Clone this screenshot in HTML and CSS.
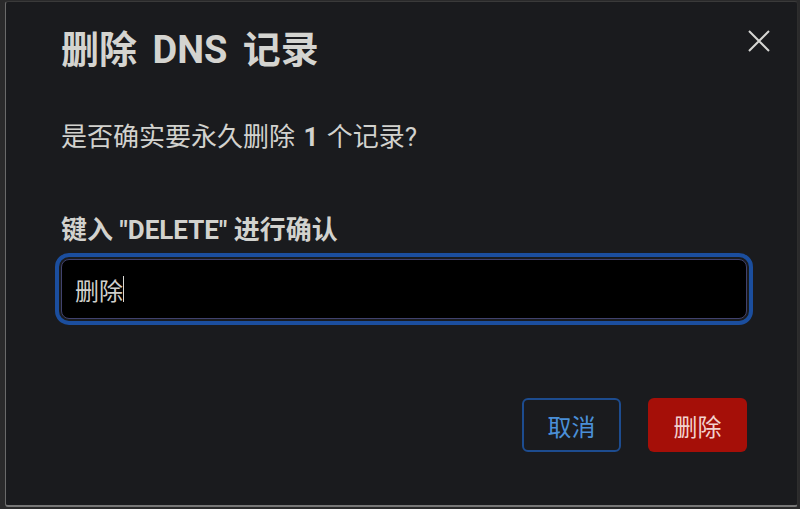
FILE: index.html
```html
<!DOCTYPE html>
<html lang="zh-CN">
<head>
<meta charset="utf-8">
<title>删除 DNS 记录</title>
<link rel="stylesheet" href="styles.css">
</head>
<body>
<div class="modal">
  <div class="header">
    <h2 class="title">删除 DNS 记录</h2>
    <button class="close" aria-label="关闭">
      <svg width="22" height="22" viewBox="0 0 22 22"><path d="M1 1L21 21M21 1L1 21" stroke="#d6d6d3" stroke-width="2" fill="none"/></svg>
    </button>
  </div>
  <p class="text">是否确实要永久删除 <b>1</b> 个记录?</p>
  <label class="label" for="confirm">键入 "DELETE" 进行确认</label>
  <div class="field">
    <input id="confirm" class="input" value="删除">
    <span class="caret"></span>
  </div>
  <div class="footer">
    <button class="btn cancel">取消</button>
    <button class="btn danger">删除</button>
  </div>
</div>
</body>
</html>
```

FILE: styles.css
```css
html, body {
  margin: 0;
  padding: 0;
  height: 100%;
}
body {
  background: #2a2a2b;
  font-family: Roboto, "Noto Sans CJK SC", sans-serif;
  overflow: hidden;
}
.modal {
  box-sizing: border-box;
  margin: 1px 2px 0 5px;
  height: 506px;
  background: #1a1b1e;
  border-left: 1px solid #6a6a6a;
  border-top: 1px solid #3a3a3a;
  border-bottom: 2px solid #777;
  border-right: 1px solid #2e2e2e;
  border-radius: 3px;
  padding: 25px 50px 0 55px;
}
.header {
  display: flex;
  justify-content: space-between;
  align-items: flex-start;
}
.title {
  margin: 0;
  font-size: 38px;
  line-height: 46px;
  font-weight: 700;
  color: #d4d4d0;
  word-spacing: 6px;
  font-family: Roboto, "Noto Sans CJK SC", sans-serif;
}
.close {
  background: none;
  border: 0;
  padding: 0;
  margin: 3px -23px 0 0;
  width: 22px;
  height: 22px;
  display: flex;
}
.text {
  margin: 46px 0 0;
  font-size: 26px;
  line-height: 36px;
  color: #d2d2ce;
  word-spacing: 2px;
}
.text b {
  font-weight: 700;
}
.label {
  display: block;
  margin-top: 57px;
  font-size: 26px;
  line-height: 36px;
  font-weight: 700;
  color: #d2d2ce;
}
.field {
  position: relative;
  margin-top: 11px;
}
.input {
  box-sizing: border-box;
  display: block;
  width: 100%;
  height: 60px;
  background: #000;
  border: 1px solid #40426e;
  border-radius: 8px;
  outline: 4px solid #1b4e9e;
  outline-offset: 2px;
  padding: 0 13px;
  font-family: "Noto Sans CJK SC", sans-serif;
  font-size: 24px;
  color: #d0d0cc;
}
.caret {
  position: absolute;
  left: 62px;
  top: 17px;
  width: 1px;
  height: 26px;
  background: #d8d8d4;
}
.footer {
  display: flex;
  justify-content: flex-end;
  gap: 27px;
  margin-top: 79px;
}
.btn {
  box-sizing: border-box;
  width: 99px;
  height: 54px;
  border-radius: 6px;
  font-family: "Noto Sans CJK SC", sans-serif;
  font-size: 24px;
  padding: 0;
}
.cancel {
  background: transparent;
  border: 2px solid #1d4c8f;
  color: #4a8fd7;
}
.danger {
  background: #a50f08;
  border: 0;
  color: #f2d2ce;
}
```
